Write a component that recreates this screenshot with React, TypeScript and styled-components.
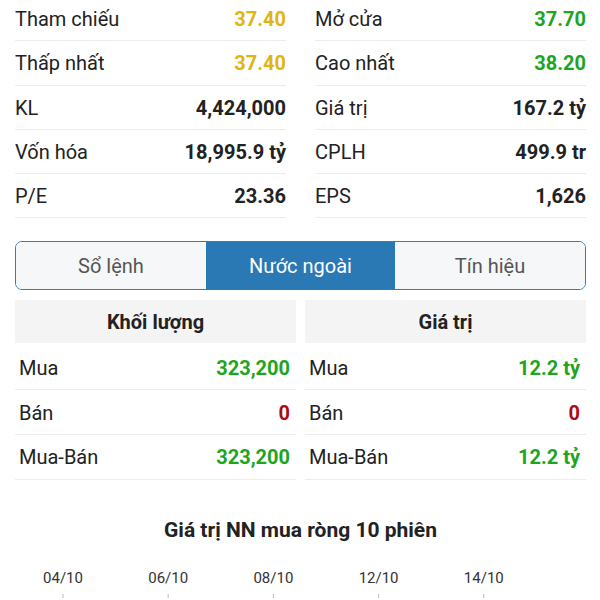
import React, { useState } from "react";
import styled, { createGlobalStyle } from "styled-components";

const GlobalStyle = createGlobalStyle`
  html, body {
    margin: 0;
    padding: 0;
    background: #ffffff;
    font-family: Roboto, "Noto Sans", "Liberation Sans", sans-serif;
    color: #222;
  }
`;

const Page = styled.div`
  width: 600px;
  height: 600px;
  overflow: hidden;
  box-sizing: border-box;
  padding: 0 14px 0 15px;
`;

const StatsGrid = styled.div`
  display: grid;
  grid-template-columns: 1fr 1fr;
  column-gap: 29px;
  margin-top: -3px;
`;

const StatRow = styled.div`
  display: flex;
  align-items: center;
  justify-content: space-between;
  height: 44.3px;
  box-sizing: border-box;
  padding-top: 1px;
  border-bottom: 1px solid #ececec;
  font-size: 20px;
`;

const Label = styled.span`
  color: #222;
`;

const Value = styled.span<{ $tone?: string }>`
  font-weight: 700;
  color: ${(p) =>
    p.$tone === "ref"
      ? "#e2b410"
      : p.$tone === "up"
      ? "#1ea51e"
      : p.$tone === "down"
      ? "#ad0d0d"
      : "#222"};
`;

const Tabs = styled.div`
  display: grid;
  grid-template-columns: 190px 189px 1fr;
  margin-top: 23px;
  height: 49px;
  border: 1.5px solid #3d7ba6;
  border-radius: 7px;
  overflow: hidden;
  box-sizing: border-box;
`;

const Tab = styled.div<{ $active?: boolean }>`
  display: flex;
  align-items: center;
  justify-content: center;
  font-size: 20px;
  background: ${(p) => (p.$active ? "#2a78b4" : "#f6f7f8")};
  color: ${(p) => (p.$active ? "#ffffff" : "#555")};
  cursor: pointer;
`;

const Foreign = styled.div`
  display: grid;
  grid-template-columns: 1fr 1fr;
  column-gap: 9px;
  margin-top: 10px;
`;

const Column = styled.div`
  display: flex;
  flex-direction: column;
`;

const ColumnHeader = styled.div`
  height: 43px;
  display: flex;
  align-items: center;
  justify-content: center;
  background: #f4f4f4;
  font-size: 20px;
  font-weight: 700;
  color: #222;
  margin-bottom: 2px;
`;

const ForeignRow = styled(StatRow)`
  height: 44.7px;
  padding: 1px 6px 0 4px;
`;

const ChartTitle = styled.div`
  margin-top: 38px;
  text-align: center;
  font-size: 21px;
  font-weight: 700;
  color: #222;
`;

const Chart = styled.svg`
  display: block;
  margin-top: 21px;
  margin-left: -15px;
`;

const stats = [
  [
    { label: "Tham chiếu", value: "37.40", tone: "ref" },
    { label: "Mở cửa", value: "37.70", tone: "up" },
  ],
  [
    { label: "Thấp nhất", value: "37.40", tone: "ref" },
    { label: "Cao nhất", value: "38.20", tone: "up" },
  ],
  [
    { label: "KL", value: "4,424,000" },
    { label: "Giá trị", value: "167.2 tỷ" },
  ],
  [
    { label: "Vốn hóa", value: "18,995.9 tỷ" },
    { label: "CPLH", value: "499.9 tr" },
  ],
  [
    { label: "P/E", value: "23.36" },
    { label: "EPS", value: "1,626" },
  ],
];

const foreign = [
  {
    title: "Khối lượng",
    rows: [
      { label: "Mua", value: "323,200", tone: "up" },
      { label: "Bán", value: "0", tone: "down" },
      { label: "Mua-Bán", value: "323,200", tone: "up" },
    ],
  },
  {
    title: "Giá trị",
    rows: [
      { label: "Mua", value: "12.2 tỷ", tone: "up" },
      { label: "Bán", value: "0", tone: "down" },
      { label: "Mua-Bán", value: "12.2 tỷ", tone: "up" },
    ],
  },
];

const dates = ["04/10", "06/10", "08/10", "12/10", "14/10"];
const tabs = ["Sổ lệnh", "Nước ngoài", "Tín hiệu"];

const App = () => {
  const [tab, setTab] = useState(1);
  return (
    <Page>
      <GlobalStyle />
      <StatsGrid>
        {stats.flat().map((s) => (
          <StatRow key={s.label}>
            <Label>{s.label}</Label>
            <Value $tone={s.tone}>{s.value}</Value>
          </StatRow>
        ))}
      </StatsGrid>

      <Tabs>
        {tabs.map((t, idx) => (
          <Tab key={t} $active={idx === tab} onClick={() => setTab(idx)}>
            {t}
          </Tab>
        ))}
      </Tabs>

      <Foreign>
        {foreign.map((col) => (
          <Column key={col.title}>
            <ColumnHeader>{col.title}</ColumnHeader>
            {col.rows.map((r) => (
              <ForeignRow key={r.label}>
                <Label>{r.label}</Label>
                <Value $tone={r.tone}>{r.value}</Value>
              </ForeignRow>
            ))}
          </Column>
        ))}
      </Foreign>

      <ChartTitle>Giá trị NN mua ròng 10 phiên</ChartTitle>

      <Chart width={600} height={60}>
        {dates.map((d, i) => {
          const x = 63 + i * 105.2;
          return (
            <g key={d}>
              <text
                x={x}
                y={20}
                textAnchor="middle"
                fontSize={15}
                fill="#333"
                fontFamily="Roboto, sans-serif"
              >
                {d}
              </text>
              <line x1={x} x2={x} y1={31} y2={35} stroke="#bbb" strokeWidth={1} />
            </g>
          );
        })}
      </Chart>
    </Page>
  );
};

export default App;
